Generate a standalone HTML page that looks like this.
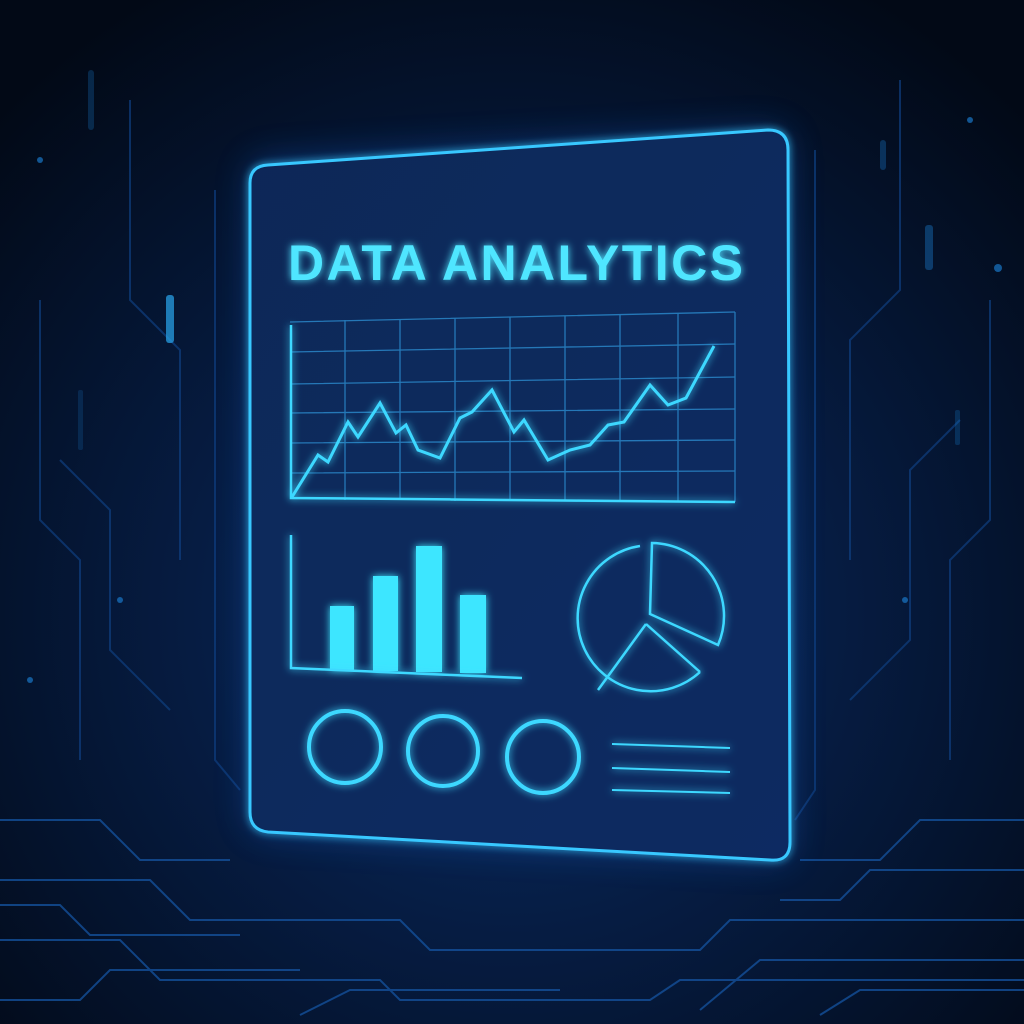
<!DOCTYPE html>
<html><head><meta charset="utf-8"><style>
html,body{margin:0;padding:0;background:#020a1a;}
svg{display:block}
</style></head><body>
<svg width="1024" height="1024" viewBox="0 0 1024 1024" xmlns="http://www.w3.org/2000/svg">
<defs>
<radialGradient id="bg" cx="50%" cy="60%" r="70%">
<stop offset="0" stop-color="#0a3068"/>
<stop offset="0.45" stop-color="#061c42"/>
<stop offset="1" stop-color="#020916"/>
</radialGradient>
<linearGradient id="card" x1="0" y1="0" x2="1" y2="1">
<stop offset="0" stop-color="#0a2858"/>
<stop offset="1" stop-color="#0a2c62"/>
</linearGradient>
<filter id="glow" x="-20%" y="-20%" width="140%" height="140%">
<feGaussianBlur stdDeviation="4" result="b"/>
<feMerge><feMergeNode in="b"/><feMergeNode in="SourceGraphic"/></feMerge>
</filter>
<filter id="bigglow" x="-30%" y="-30%" width="160%" height="160%">
<feGaussianBlur stdDeviation="18"/>
</filter>
</defs>
<rect width="1024" height="1024" fill="url(#bg)"/>
<g stroke="#14509a" stroke-width="2" fill="none" opacity="0.8">
<path d="M0 880 L150 880 L190 920 L400 920 L430 950 L700 950 L730 920 L1024 920"/>
<path d="M0 940 L120 940 L160 980 L380 980 L400 1000 L650 1000 L680 980 L1024 980"/>
<path d="M0 820 L100 820 L140 860 L230 860"/>
<path d="M800 860 L880 860 L920 820 L1024 820"/>
<path d="M0 1000 L80 1000 L110 970 L300 970"/>
<path d="M700 1010 L760 960 L1024 960"/>
<path d="M0 905 L60 905 L90 935 L240 935 M780 900 L840 900 L870 870 L1024 870 M300 1015 L350 990 L560 990 M820 1015 L860 990 L1024 990"/>
</g>
<g stroke="#0f3f80" stroke-width="2" fill="none" opacity="0.7">
<path d="M60 460 L110 510 L110 650 L170 710"/>
<path d="M960 420 L910 470 L910 640 L850 700"/>
<path d="M130 100 L130 300 L180 350 L180 560"/>
<path d="M900 80 L900 290 L850 340 L850 560"/>
<path d="M40 300 L40 520 L80 560 L80 760"/>
<path d="M990 300 L990 520 L950 560 L950 760"/>
<path d="M215 190 L215 760 L240 790"/>
<path d="M815 150 L815 790 L795 820"/>
</g>
<g fill="#1a78c8" opacity="0.7">
<rect x="166" y="295" width="8" height="48" rx="3" fill="#2aa8f0"/>
<rect x="88" y="70" width="6" height="60" rx="3" opacity="0.4"/>
<rect x="925" y="225" width="8" height="45" rx="3" opacity="0.6"/>
<rect x="880" y="140" width="6" height="30" rx="3" opacity="0.5"/>
<rect x="78" y="390" width="5" height="60" rx="2" opacity="0.3"/>
<rect x="955" y="410" width="5" height="35" rx="2" opacity="0.4"/>
<circle cx="998" cy="268" r="4"/><circle cx="40" cy="160" r="3"/>
<circle cx="970" cy="120" r="3"/><circle cx="120" cy="600" r="3"/>
<circle cx="905" cy="600" r="3"/><circle cx="30" cy="680" r="3"/>
</g>
<path d="M250 175 Q250 160 265 160 L770 130 Q788 130 788 148 L790 845 Q790 862 772 860 L265 832 Q250 830 250 815 Z" fill="#1b78ff" opacity="0.3" filter="url(#bigglow)"/>
<path d="M268 165 L768 130 Q788 130 788 150 L790 842 Q790 862 770 860 L268 832 Q250 830 250 812 L250 183 Q250 166 268 165 Z" fill="url(#card)" stroke="#39c8ff" stroke-width="3" filter="url(#glow)"/>
<text x="288" y="280" font-family="Liberation Sans, sans-serif" font-size="50" font-weight="bold" fill="#4fe6ff" textLength="455" lengthAdjust="spacing" filter="url(#glow)">DATA ANALYTICS</text>
<g stroke="#2a86c8" stroke-width="1.3" opacity="0.85">
<path d="M290 322 L735 312 M290 352 L735 344 M290 384 L735 377 M290 413 L735 409 M290 443 L735 440 M290 473 L735 471"/>
<path d="M345 320 V500 M400 319 V500 M455 318 V501 M510 317 V501 M565 316 V501 M620 315 V502 M678 313 V502 M735 312 V502"/>
</g>
<g stroke="#3cd8ff" stroke-width="2.5" fill="none" filter="url(#glow)">
<path d="M291 325 V498 L735 502"/>
<polyline points="292,497 318,455 328,462 348,422 358,437 380,403 396,433 406,425 418,450 440,458 460,418 472,412 492,390 514,432 524,420 548,460 570,450 590,445 608,425 624,422 650,385 668,405 686,398 714,346" stroke-width="3"/>
</g>
<g fill="#3de6ff" filter="url(#glow)">
<rect x="330" y="606" width="24" height="64"/>
<rect x="373" y="576" width="25" height="95"/>
<rect x="416" y="546" width="26" height="126"/>
<rect x="460" y="595" width="26" height="78"/>
</g>
<g stroke="#3cd8ff" stroke-width="2.5" fill="none" filter="url(#glow)">
<path d="M291 535 V668 L522 678"/>
<path d="M700 672 A73 73 0 1 1 640 546"/>
<path d="M652 543 A73 73 0 0 1 718 645 L650 614 Z"/>
<path d="M646 624 L598 690 M646 624 L700 672"/>
<circle cx="345" cy="747" r="36" stroke-width="4"/>
<circle cx="443" cy="751" r="35" stroke-width="4"/>
<circle cx="543" cy="757" r="36" stroke-width="4"/>
<path d="M612 744 L730 748 M612 768 L730 772 M612 790 L730 793" stroke-width="2"/>
</g>
</svg>
</body></html>
